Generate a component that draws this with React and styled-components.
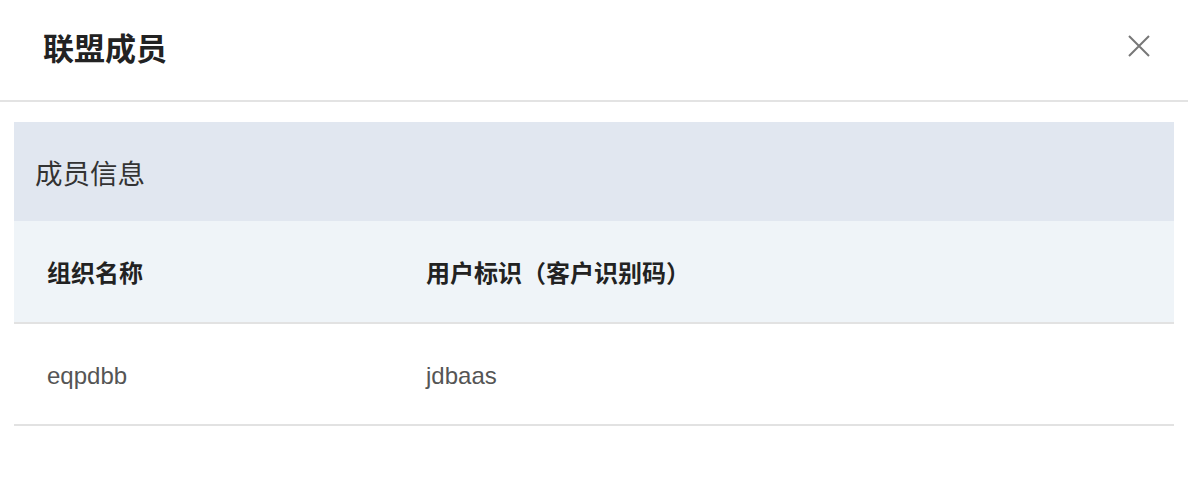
import styled, { createGlobalStyle } from 'styled-components';

const GlobalStyle = createGlobalStyle`
  body {
    margin: 0;
    background: #fff;
    font-family: 'Liberation Sans', 'Noto Sans CJK SC', sans-serif;
  }
`;

const Modal = styled.div`
  width: 1188px;
  height: 502px;
  background: #fff;
`;

const Header = styled.div`
  height: 102px;
  display: flex;
  align-items: center;
  justify-content: space-between;
  padding: 0 38px 8px 43px;
  box-sizing: border-box;
  border-bottom: 2px solid #e3e3e3;
`;

const Title = styled.h2`
  margin: 0;
  font-size: 31px;
  font-weight: bold;
  color: #222;
`;

const CloseButton = styled.button`
  border: none;
  background: none;
  padding: 0;
  width: 22px;
  height: 22px;
  display: flex;
  cursor: pointer;
`;

const Body = styled.div`
  padding: 20px 14px 0 14px;
`;

const Section = styled.div`
  width: 1160px;
`;

const SectionHeader = styled.div`
  height: 99px;
  display: flex;
  align-items: center;
  padding-left: 21px;
  background: #e1e7f0;
  font-size: 27.5px;
  color: #333;
`;

const Row = styled.div`
  display: grid;
  grid-template-columns: 379px 1fr;
  height: ${({ $head }) => ($head ? '101px' : '100px')};
  align-items: center;
  background: ${({ $head }) => ($head ? '#eff4f8' : '#fff')};
  border-bottom: 2px solid #e2e2e2;
`;

const Cell = styled.div`
  padding-left: 33px;
  padding-top: ${({ $head }) => ($head ? '0' : '4px')};
  font-size: ${({ $head }) => ($head ? '24px' : '24px')};
  font-weight: ${({ $head }) => ($head ? 'bold' : 'normal')};
  color: ${({ $head }) => ($head ? '#222' : '#555')};
`;

const members = [{ org: 'eqpdbb', user: 'jdbaas' }];

const App = () => {
  return (
    <Modal>
      <GlobalStyle />
      <Header>
        <Title>联盟成员</Title>
        <CloseButton aria-label="close">
          <svg width="22" height="22" viewBox="0 0 22 22">
            <path d="M1 1 L21 21 M21 1 L1 21" stroke="#777" strokeWidth="2" fill="none" />
          </svg>
        </CloseButton>
      </Header>
      <Body>
        <Section>
          <SectionHeader>成员信息</SectionHeader>
          <Row $head>
            <Cell $head>组织名称</Cell>
            <Cell $head>用户标识（客户识别码）</Cell>
          </Row>
          {members.map((m) => (
            <Row key={m.org}>
              <Cell>{m.org}</Cell>
              <Cell>{m.user}</Cell>
            </Row>
          ))}
        </Section>
      </Body>
    </Modal>
  );
};

export default App;
